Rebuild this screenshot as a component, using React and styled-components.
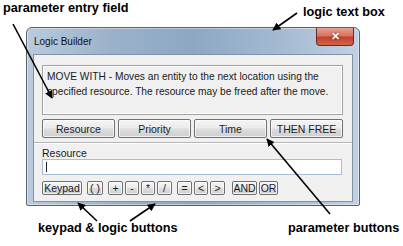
import styled, { createGlobalStyle } from "styled-components";

const GlobalStyle = createGlobalStyle`
  html, body {
    margin: 0;
    padding: 0;
    background: #fff;
  }
  body {
    font-family: "Liberation Sans", Arial, sans-serif;
  }
`;

const Figure = styled.div`
  position: relative;
  width: 403px;
  height: 246px;
  padding: 27px 0 0 26px;
  box-sizing: border-box;
  overflow: hidden;
`;

const Callout = styled.div`
  position: absolute;
  left: ${(p) => p.$x}px;
  top: ${(p) => p.$y}px;
  font-size: 12.7px;
  line-height: 15px;
  font-weight: bold;
  color: #000;
  white-space: nowrap;
`;

const Arrows = styled.svg`
  position: absolute;
  left: 0;
  top: 0;
  pointer-events: none;
`;

const Window = styled.div`
  width: 334px;
  box-sizing: border-box;
  border: 1px solid #59636e;
  border-radius: 6px 6px 2px 2px;
  padding: 0 6px 3px;
  background: linear-gradient(
    to right,
    #b9cbdd 0%,
    #9bb2ca 25%,
    #8da7c3 50%,
    #a2b9d1 75%,
    #c0d1e2 100%
  );
  box-shadow: inset 0 0 0 1px rgba(255, 255, 255, 0.4);
`;

const TitleBar = styled.div`
  height: 26px;
  display: flex;
  align-items: center;
  justify-content: space-between;
`;

const Title = styled.span`
  font-size: 10px;
  color: #111;
  padding-left: 1px;
  margin-top: 1px;
`;

const CloseButton = styled.div`
  align-self: flex-start;
  width: 38px;
  height: 18px;
  margin-right: -1px;
  box-sizing: border-box;
  border: 1px solid #6b2b22;
  border-top: none;
  border-radius: 0 0 4px 4px;
  background: linear-gradient(to bottom, #e6a395 0%, #d8735f 45%, #c2402a 55%, #d2644c 100%);
  display: flex;
  align-items: center;
  justify-content: center;
  color: #fff;
  font-size: 11px;
  font-weight: bold;
  text-shadow: 0 0 2px #5a1a10;
`;

const Client = styled.div`
  background: #f0f0f0;
  border: 1px solid #8293a6;
  padding: 0 9px 6px 8px;
  font-size: 10px;
  color: #1a1a1a;
`;

const LogicText = styled.div`
  margin-top: 10px;
  height: 50px;
  box-sizing: border-box;
  border: 1px solid #a3a3a3;
  box-shadow: inset 0 0 0 1px #fff;
  padding: 3px 4px;
  line-height: 15px;
  font-size: 10.2px;
`;

const ParamRow = styled.div`
  margin-top: 4px;
  display: grid;
  grid-template-columns: repeat(4, 1fr);
  gap: 3px;
`;

const Button = styled.div`
  height: ${(p) => (p.$small ? 14 : 19)}px;
  width: ${(p) => (p.$w ? `${p.$w}px` : "auto")};
  box-sizing: border-box;
  border: 1px solid #707070;
  border-radius: 2px;
  background: linear-gradient(to bottom, #f4f4f4 0%, #ebebeb 48%, #dddddd 52%, #cfcfcf 100%);
  box-shadow: inset 0 0 0 1px rgba(255, 255, 255, 0.7);
  display: flex;
  align-items: center;
  justify-content: center;
  font-size: ${(p) => (p.$small ? 10.5 : 10.5)}px;
  color: #1c1c2a;
  white-space: nowrap;
`;

const Divider = styled.div`
  margin: 4px -9px 0 -8px;
  height: 0;
  border-top: 1px solid #b5b5b5;
  border-bottom: 1px solid #fff;
`;

const FieldLabel = styled.div`
  margin-top: 3px;
  line-height: 12px;
  font-size: 10.5px;
`;

const Input = styled.div`
  width: 300px;
  height: 16px;
  box-sizing: border-box;
  border: 1px solid #a8bdd6;
  background: #fff;
  padding: 2px 3px;
  display: flex;
  align-items: center;
`;

const Caret = styled.span`
  width: 1px;
  height: 10px;
  background: #222;
`;

const KeyRow = styled.div`
  margin-top: 6px;
  display: flex;
  gap: 5px;
`;

const KeyGroup = styled.div`
  display: flex;
  gap: ${(p) => p.$gap ?? 2}px;
  margin-left: ${(p) => p.$ml ?? 0}px;
`;

const params = ["Resource", "Priority", "Time", "THEN FREE"];

const Arrow = ({ x1, y1, x2, y2 }) => (
  <line x1={x1} y1={y1} x2={x2} y2={y2} stroke="#000" strokeWidth="1.6" markerEnd="url(#head)" />
);

export default function App() {
  return (
    <>
      <GlobalStyle />
      <Figure>
        <Window>
          <TitleBar>
            <Title>Logic Builder</Title>
            <CloseButton>✕</CloseButton>
          </TitleBar>
          <Client>
            <LogicText>
              MOVE WITH - Moves an entity to the next location using the
              specified resource. The resource may be freed after the move.
            </LogicText>
            <ParamRow>
              {params.map((p) => (
                <Button key={p}>{p}</Button>
              ))}
            </ParamRow>
            <Divider />
            <FieldLabel>Resource</FieldLabel>
            <Input>
              <Caret />
            </Input>
            <KeyRow>
              <Button $small $w={40}>Keypad</Button>
              <Button $small $w={16}>( )</Button>
              <KeyGroup>
                <Button $small $w={15}>+</Button>
                <Button $small $w={14}>-</Button>
                <Button $small $w={14}>*</Button>
                <Button $small $w={15}>/</Button>
              </KeyGroup>
              <KeyGroup>
                <Button $small $w={15}>=</Button>
                <Button $small $w={14}>&lt;</Button>
                <Button $small $w={15}>&gt;</Button>
              </KeyGroup>
              <KeyGroup $ml={2}>
                <Button $small $w={25}>AND</Button>
                <Button $small $w={19}>OR</Button>
              </KeyGroup>
            </KeyRow>
          </Client>
        </Window>

        <Callout $x={3} $y={1}>parameter entry field</Callout>
        <Callout $x={303} $y={5}>logic text box</Callout>
        <Callout $x={38} $y={221}>keypad &amp; logic buttons</Callout>
        <Callout $x={288} $y={221}>parameter buttons</Callout>

        <Arrows width="403" height="246" viewBox="0 0 403 246">
          <defs>
            <marker id="head" viewBox="0 0 10 10" refX="9" refY="5" markerWidth="5" markerHeight="5" orient="auto">
              <path d="M0 0 L10 5 L0 10 Z" fill="#000" />
            </marker>
          </defs>
          <Arrow x1={13} y1={24} x2={52} y2={98} />
          <Arrow x1={297} y1={13} x2={273} y2={30} />
          <Arrow x1={330} y1={214} x2={267} y2={139} />
          <Arrow x1={97} y1={221} x2={78} y2={203} />
          <Arrow x1={130} y1={221} x2={155} y2={204} />
        </Arrows>
      </Figure>
    </>
  );
}
